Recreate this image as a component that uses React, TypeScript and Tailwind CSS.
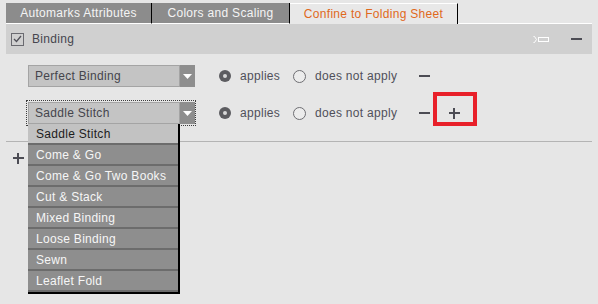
import React from "react";

const font = { fontFamily: '"Liberation Sans", Arial, sans-serif' };

const tabs = [
  { label: "Automarks Attributes", width: "w-[146px]", active: false },
  { label: "Colors and Scaling", width: "w-[138px]", active: false },
  { label: "Confine to Folding Sheet", width: "w-[168px]", active: true },
];

const bindings = [
  "Saddle Stitch",
  "Come & Go",
  "Come & Go Two Books",
  "Cut & Stack",
  "Mixed Binding",
  "Loose Binding",
  "Sewn",
  "Leaflet Fold",
];

function Minus() {
  return <span className="block h-[2px] w-[11px] bg-[#4c4c54]" />;
}

function Plus() {
  return (
    <span className="relative block h-[11px] w-[11px]">
      <span className="absolute left-0 top-[4px] h-[2px] w-[11px] bg-[#4c4c54]" />
      <span className="absolute left-[4px] top-0 h-[11px] w-[2px] bg-[#4c4c54]" />
    </span>
  );
}

function Select({ value }: { value: string }) {
  return (
    <div className="flex h-[22px] w-[167px]">
      <div className="flex h-full w-[152px] items-center border border-[#a4a4a4] bg-[#c4c4c4] pl-[6px] text-[12px] tracking-[0.3px] text-[#45454c]">
        {value}
      </div>
      <div className="flex h-full w-[15px] items-center justify-center bg-[#8e8e8e]">
        <svg width="9" height="5" viewBox="0 0 9 5">
          <path d="M0 0h9L4.5 5z" fill="#ffffff" />
        </svg>
      </div>
    </div>
  );
}

function Radios() {
  return (
    <div className="ml-[24px] flex items-center text-[12px] tracking-[0.3px] text-[#50505a]">
      <div className="flex w-[74px] items-center">
        <span className="flex h-[12px] w-[12px] items-center justify-center rounded-full bg-[#5c5c60]">
          <span className="block h-[4px] w-[4px] rounded-full bg-[#d8d8d8]" />
        </span>
        <span className="ml-[9px]">applies</span>
      </div>
      <div className="flex w-[126px] items-center">
        <span className="block h-[13px] w-[13px] rounded-full border border-[#6e6e72] bg-[#ececec]" />
        <span className="ml-[9px]">does not apply</span>
      </div>
    </div>
  );
}

export default function App() {
  return (
    <div className="relative h-[304px] w-[598px] overflow-hidden bg-[#e6e6e6] px-[6px] pt-[3px]" style={font}>
      <div className="flex h-[21px]">
        {tabs.map((tab) =>
          tab.active ? (
            <div
              key={tab.label}
              className={`${tab.width} flex items-center justify-center border-r border-t border-r-black border-t-white bg-[#e8e8e8] text-[12px] tracking-[0.3px] text-[#e0691c]`}
            >
              {tab.label}
            </div>
          ) : (
            <div
              key={tab.label}
              className={`${tab.width} flex items-center justify-center border-b border-r border-b-white border-r-black bg-[#8c8c8c] text-[12px] tracking-[0.3px] text-[#f4f4f4]`}
            >
              {tab.label}
            </div>
          )
        )}
        <div className="flex-1 border-b border-white" />
      </div>

      <div className="flex h-[30px] items-center bg-[#d0d0d0] pl-[5px] pr-[10px]">
        <span className="flex h-[13px] w-[13px] items-center justify-center border border-[#6a6a70]">
          <svg width="9" height="8" viewBox="0 0 9 8">
            <path d="M1 4l2.5 2.5L8 1" fill="none" stroke="#505058" strokeWidth="1.3" />
          </svg>
        </span>
        <span className="ml-[8px] text-[12px] tracking-[0.3px] text-[#46464e]">Binding</span>
        <span className="ml-auto mr-[21px] flex items-center">
          <svg width="17" height="7" viewBox="0 0 17 7">
            <path d="M0.5 0.5h1l2 3-2 3h-1" fill="none" stroke="#ffffff" strokeWidth="1" />
            <rect x="5.5" y="1.5" width="10" height="4" fill="none" stroke="#ffffff" strokeWidth="1" />
          </svg>
        </span>
        <Minus />
      </div>

      <div className="mt-[11px] flex items-center pl-[22px]">
        <Select value="Perfect Binding" />
        <Radios />
        <Minus />
      </div>

      <div className="mt-[15px] flex items-center pl-[22px]">
        <div className="relative">
          <div className="absolute -left-[2px] -right-[1px] -top-[2px] -bottom-[2px] border border-dotted border-[#3c3c3c]" />
          <Select value="Saddle Stitch" />
          <div className="absolute left-0 top-[22px] z-10 w-[152px] border-b-2 border-r-2 border-black">
            {bindings.map((item, i) => (
              <div
                key={item}
                className={`flex h-[21px] items-center border-b-2 border-[#6c6c6c] pl-[8px] text-[12px] tracking-[0.3px] ${
                  i === 0 ? "bg-[#c2c2c2] text-[#1c1c1c]" : "bg-[#8e8e8e] text-[#f6f6f6]"
                }`}
              >
                {item}
              </div>
            ))}
          </div>
        </div>
        <Radios />
        <Minus />
        <div className="relative ml-[19px]">
          <Plus />
          <div className="absolute -left-[16px] -top-[16px] h-[34px] w-[44px] border-[4px] border-[#e8202a]" />
        </div>
      </div>

      <div className="mt-[17px] h-px bg-[#b4b4b4]" />

      <div className="mt-[11px] pl-[7px]">
        <Plus />
      </div>
    </div>
  );
}
